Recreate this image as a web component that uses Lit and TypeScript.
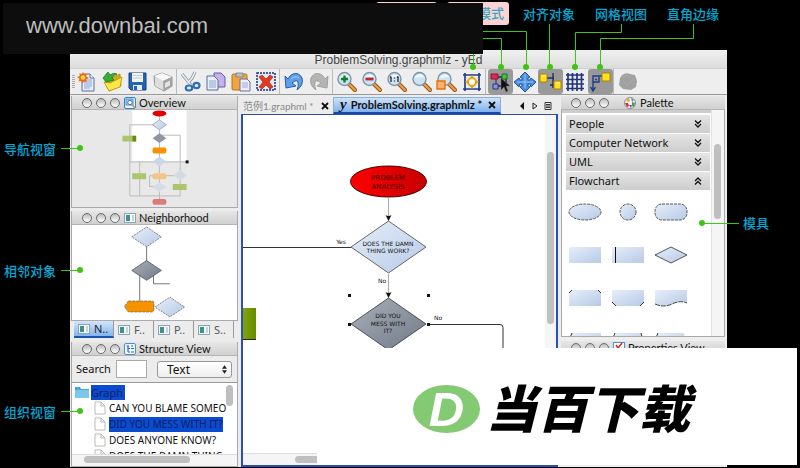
import { LitElement, html, svg, css } from "lit";
import { customElement, property } from "lit/decorators.js";

const page = svg`<path d="M6 4h8l4 4v13H6z" fill="#e9effc" stroke="#5b6c9e"/><path d="M14 4v4h4" fill="#fff" stroke="#5b6c9e"/><path d="M8 10h8M8 12h8M8 14h8M8 16h8M8 18h6" stroke="#8da3d6"/>`;

const lens = (inner: unknown) => svg`
  <path d="M14 14l6 6" stroke="#8c4d17" stroke-width="4" stroke-linecap="round"/>
  <path d="M14 14l6 6" stroke="#f49a3f" stroke-width="2.4" stroke-linecap="round"/>
  <circle cx="9.5" cy="9" r="6.5" fill="#cfe4f3" stroke="#7b95ab" stroke-width="1.4"/>
  <path d="M5 8a5 5 0 0 1 9-1q-4 0-9 1" fill="#f4fbff"/>${inner}`;

const icons: Record<string, unknown> = {
  new: svg`${page}<path d="M7 2l1.3 2.4L11 3.8l-.7 2.6L13 8l-2.700 1.300.4 2.700-2.600-.6L6.500 13.500 5.300 11 2.600 11.400l.8-2.600L1 7l2.700-1.100-.3-2.600 2.500.8z" fill="#f26a17"/><circle cx="7" cy="7.500" r="2.300" fill="#ffd63d"/>`,
  open: svg`<path d="M5 9l4-3 3 1 7-3 1 12-12 5z" fill="#d7a90c" stroke="#a98207" stroke-width=".7"/><path d="M3 12l6 1 12-6-2 10-11 4z" fill="#ffe746" stroke="#b28e0b" stroke-width=".8"/><path d="M2 8l5-6 2 3q4-3 7-1-4 1-5 4l2 2-8 2z" fill="#35ac32" stroke="#1c7a21" stroke-width=".8"/>`,
  save: svg`<path d="M3 3h17v17H5l-2-2z" fill="#2563b3" stroke="#173f85"/><path d="M6 3h11v9H6z" fill="#f1f3f6"/><path d="M7 5.500h9M7 8h9" stroke="#c6ccd4"/><path d="M7 15h9v5H7z" fill="#e8edf3"/><path d="M8 16h3v4H8z" fill="#2563b3"/>`,
  print: svg`<path d="M3 6l8-3 10 4v9l-8 5-9-5z" fill="#c4c4c4" stroke="#8a8a8a" stroke-width=".9"/><path d="M3 6l8-3 10 4-9 4z" fill="#f8f8f8"/><path d="M12 11l9-4v9l-8 5z" fill="#a2a2a2"/><path d="M14 13l5-2.500v5L14 18z" fill="#e4e4e4"/><path d="M4 7l8 4v9l-8-4z" fill="#dedede"/>`,
  cut: svg`<path d="M3 4q4 5 9 11M16 2q-2 6-7 11" stroke="#8e98a5" stroke-width="3.200" fill="none"/><path d="M3 4q4 5 9 11M16 2q-2 6-7 11" stroke="#e8ecf0" stroke-width="1.600" fill="none"/><ellipse cx="10" cy="18" rx="3.200" ry="2.500" fill="none" stroke="#2f6db8" stroke-width="2.200"/><ellipse cx="17.500" cy="15.500" rx="3" ry="2.600" fill="none" stroke="#2f6db8" stroke-width="2.200"/>`,
  copy: svg`<path d="M10 3h7l4 4v10H10z" fill="#c3b3ea" stroke="#6c5ba0"/><path d="M3 6h7l4 4v10H3z" fill="#e9effc" stroke="#5b6c9e"/><path d="M5 11h7M5 13h7M5 15h7M5 17h7" stroke="#8da3d6"/>`,
  paste: svg`<rect x="3" y="4" width="15" height="16" rx="1.500" fill="#f1a53c" stroke="#b0701d"/><path d="M7 3h7v4H7z" fill="#b9bec5" stroke="#7a7f87" stroke-width=".8"/><path d="M11 9h7l3 3v9H11z" fill="#eceffb" stroke="#6f6aa5"/><path d="M13 13h6M13 15h6M13 17h6" stroke="#9fa8d6"/>`,
  remove: svg`<rect x="3" y="3" width="18" height="17" fill="#dfe8f6" stroke="#17307c" stroke-width="1.500" stroke-dasharray="2 1"/><path d="M5 7l3-2 4 4 4-4 3 2-4 5 4 5-3 2-4-4-4 4-3-2 4-5z" fill="#e5391b" stroke="#9e1e0c" stroke-width=".6"/>`,
  undo: svg`<path d="M3 6l1 12 10-2-4-3q5-4 6-1 1 4-1 8 7-5 5-12-3-6-9-4-3 1-5 5z" fill="#5f9fe8" stroke="#1e5cab"/><path d="M9 9q4-4 8-1" stroke="#a9cdf6" fill="none"/>`,
  redo: svg`<path d="M21 6l-1 12-10-2 4-3q-5-4-6-1-1 4 1 8-7-5-5-12 3-6 9-4 3 1 5 5z" fill="#b4b4b4" stroke="#a0a0a0"/>`,
  zoomIn: lens(svg`<path d="M9.500 5.500v7M6 9h7" stroke="#147c24" stroke-width="2.400"/>`),
  zoomOut: lens(svg`<path d="M5.500 9h8" stroke="#c22133" stroke-width="2.800"/>`),
  zoomReset: lens(svg`<path d="M6 6.500v5.500M5 7.500l1-1M13 6.500v5.500M12 7.500l1-1M9.500 7.500v1M9.500 10.500v1" stroke="#222" stroke-width="1.300"/>`),
  zoom: lens(svg``),
  zoomArea: lens(svg`<path d="M2 11h8v8H2z" fill="#f9b26b" stroke="#e4730d" stroke-width="1.400"/>`),
  fit: svg`<path d="M5 3v18M19 3v18M3 5h18M3 19h18" stroke="#233f8e" stroke-width="1.700"/><circle cx="12" cy="12" r="4" fill="#fff" stroke="#e6a80f" stroke-width="2"/><path d="M12 5l2 3h-4zM12 19l2-3h-4zM5 12l3-2v4zM19 12l-3-2v4z" fill="#e6a80f"/>`,
  edit: svg`<path d="M8 7h10v9H9" fill="none" stroke="#1d2c68" stroke-width="1.500"/><path d="M8 8v8" stroke="#1d2c68"/><path d="M3 4h7v5H3z" fill="#df2858" stroke="#8e1237"/><path d="M14 4h5v5h-5z" fill="#3fc63c" stroke="#1b761c"/><path d="M5 14h5v5H5z" fill="#8797df" stroke="#25377f"/><path d="M13 8v12l3-3 2 5 2-1-2-5h4z" fill="#111" stroke="#777" stroke-width=".5"/>`,
  move: svg`<path d="M12 2l5 5-2 1v2h2l1-2 5 4-5 5-1-3h-2v2l2 1-5 5-5-5 2-1v-2H7l-1 3-5-5 5-4 1 2h2V8L7 7z" fill="#4b8ee0" stroke="#1c55a5"/><path d="M12 4v14M4 12h16" stroke="#9ac5f5"/>`,
  snap: svg`<path d="M9 8h7M15 3v15M15 15h-3" stroke="#1d2c68" stroke-width="1.400"/><path d="M2 4h7v8H2zM16 11h7v8h-7z" fill="#ffe01f" stroke="#a98500"/><path d="M4 6h4M18 13h4" stroke="#fff6a2"/>`,
  grid: svg`<path d="M5 3v18M9.500 3v18M14 3v18M18.500 3v18M3 5h18M3 9.500h18M3 14h18M3 18.500h18" stroke="#22357d" stroke-width="1.700"/>`,
  ortho: svg`<path d="M15 6H5v14M2.500 17L5 21l2.500-4M5 12h6V7" fill="none" stroke="#1d3a86" stroke-width="1.400"/><circle cx="8" cy="9.500" r="1" fill="#1d3a86"/><path d="M14 3h8v8h-8z" fill="#ffe01f" stroke="#a98500"/>`,
  cube: svg`<path d="M6 5q4-3 8-1l5 1 2 6-1 6-5 3-8-1-4-4 1-7z" fill="#a1a1a1"/><path d="M7 7l4-2 3 3M12 14l7-5M8 12l4 4" stroke="#adadad" fill="none"/>`,
};

const groups: [string, string][][] = [
  [["new", "New"], ["open", "Open"], ["save", "Save"], ["print", "Print"]],
  [["cut", "Cut"], ["copy", "Copy"], ["paste", "Paste"], ["remove", "Delete"]],
  [["undo", "Undo"], ["redo", "Redo"]],
  [["zoomIn", "Zoom in"], ["zoomOut", "Zoom out"], ["zoomReset", "Zoom 1:1"], ["zoom", "Zoom"], ["zoomArea", "Zoom to area"], ["fit", "Fit content"]],
  [["edit", "Edit mode"], ["move", "Navigation mode"], ["snap", "Snap"], ["grid", "Grid"], ["ortho", "Orthogonal edges"]],
  [["cube", "3D"]],
];
const pressed = new Set(["edit", "snap", "ortho"]);

const panelIcons: Record<string, unknown> = {
  overview: svg`<rect x=".5" y=".5" width="11" height="11" rx="1.500" fill="#eaf5ff" stroke="#2789d8"/><rect x="2" y="2" width="7" height="6" fill="#a8cdf0" stroke="#5c8cc0"/><circle cx="6" cy="5.500" r="2.200" fill="#fff" stroke="#3c77b5"/><path d="M8 7.500l2.500 3" stroke="#e8862c" stroke-width="1.500"/>`,
  list: svg`<rect x=".5" y="1.500" width="11" height="9" fill="#f6fbff" stroke="#8ca3b5"/><path d="M2 3h4v6H2z" fill="#3d9188"/><path d="M8 4h2M8 6h2M8 8h2" stroke="#9aa"/>`,
  tree: svg`<rect x=".5" y=".5" width="11" height="11" rx="1.500" fill="#eef6ff" stroke="#4b8fd6"/><path d="M2.500 3H5M4 3v6M4 5.500h2M4 9h2M7 3h2M7 5.500h3M7 9h3" stroke="#3569b8" stroke-width="1.200" fill="none"/>`,
  palette: svg`<circle cx="6" cy="6" r="5.500" fill="#f4f4f4" stroke="#8b8b8b"/><path d="M2 3l3-2 1 3-2 1z" fill="#f0a020"/><path d="M7 1l3 2-2 2z" fill="#3a8fe0"/><path d="M1 6h3l1 3-2 1z" fill="#d52f2f"/><path d="M8 5l3 1-1 4-2-1z" fill="#3aa83a"/><path d="M5 8h3l-1 3z" fill="#8040b0"/>`,
  check: svg`<rect x=".5" y=".5" width="11" height="11" fill="#fff" stroke="#4b8fd6"/><path d="M3 3l2 3 4-5M3 8l2 3 4-5" stroke="#d22" stroke-width="1.500" fill="none"/>`,
};

@customElement("panel-header")
export class PanelHeader extends LitElement {
  @property() label = "";
  @property() icon = "";
  static styles = css`
    :host { display: flex; align-items: center; height: 14px; padding-left: 10px; background: linear-gradient(#e6e6e6, #d0d0d0); border-bottom: 1px solid #b4b4b4; font: 11px/14px "Lato", sans-serif; color: #111; }
    button { flex: none; width: 10px; height: 10px; padding: 0; margin-right: 4px; border: 1px solid #6a6a6a; border-radius: 5px; background: linear-gradient(#bbb, #fff); }
    svg { flex: none; width: 12px; height: 12px; margin-right: 3px; }
    :host([spaced]) svg { margin: 0 4px 0 11px; }
    h2 { margin: 0; font: inherit; white-space: nowrap; }
  `;
  render() {
    return html`<button aria-label="Close"></button><button aria-label="Float"></button><button aria-label="Dock"></button>
      <svg viewBox="0 0 12 12" aria-hidden="true">${panelIcons[this.icon]}</svg><h2>${this.label}</h2>`;
  }
}

const diamond = (cx: number, cy: number, w: number, h: number) => `M${cx} ${cy - h}L${cx + w} ${cy}L${cx} ${cy + h}L${cx - w} ${cy}Z`;

const gradients = svg`<defs>
  <linearGradient id="pale" x1="0" y1="0" x2="1" y2="1"><stop offset="0" stop-color="#e6effa"/><stop offset="1" stop-color="#b7c9e6"/></linearGradient>
  <linearGradient id="slate" x1="0" y1="0" x2="1" y2="1"><stop offset="0" stop-color="#a8afb9"/><stop offset="1" stop-color="#717a88"/></linearGradient>
  <linearGradient id="red"><stop offset="0" stop-color="#ff0000"/><stop offset="1" stop-color="#c80000"/></linearGradient>
  <linearGradient id="green"><stop offset="0" stop-color="#7fa408"/><stop offset="1" stop-color="#668c00"/></linearGradient>
</defs>`;

const sections = [["People", false], ["Computer Network", false], ["UML", false], ["Flowchart", true]] as const;

const shapes = [
  svg`<ellipse cx="17" cy="9" rx="16" ry="8" class="dash"/>`,
  svg`<circle cx="17" cy="9" r="8" class="dash"/>`,
  svg`<rect x="1" y="1" width="32" height="16" rx="7" class="dash"/>`,
  svg`<path d="M1 1h32v16H1z"/>`,
  svg`<path d="M1 1h32v16H1z"/><path d="M4.500 1v16" stroke="#111"/>`,
  svg`<path d="M17 1l16 8-16 8L1 9z" stroke="#555"/>`,
  svg`<path d="M4 1h26l3 3v13H1V4z"/><path d="M1 4l3-3M30 1l3 3" stroke="#333"/>`,
  svg`<path d="M1 1h32v12l-4 4H5l-4-4z"/><path d="M1 13l4 4M33 13l-4 4" stroke="#333"/>`,
  svg`<path d="M1 1h32v13q-8-3-15 1T1 15z"/><path d="M1 15q9 4 17 0t15-1" fill="none" stroke="#444" stroke-dasharray="5 1"/>`,
  svg`<path d="M4 1h29v16H1z"/><path d="M4 1L1 8" stroke="#333"/>`,
  svg`<path d="M4 1h26l3 16H1z"/><path d="M4 1L1 8M30 1l2 7" stroke="#333"/>`,
  svg`<path d="M4 1h26l3 16H1z"/><path d="M4 1L1 8" stroke="#333"/>`,
];

@customElement("app-root")
export class AppRoot extends LitElement {
  static styles = css`
    :host { display: flex; flex-direction: column; position: relative; box-sizing: border-box; min-height: 100vh; padding: 50px 73px 1px 70px; overflow: hidden; background: #000; color: #111; font: 11px/14px "Noto Sans", "Noto Sans CJK SC", sans-serif; }
    * { box-sizing: border-box; }
    button, input, select { font: inherit; color: inherit; }
    button { padding: 0; border: 0; background: none; }
    .window { flex: 1; display: flex; flex-direction: column; background: #ececec; }
    .title { margin: 0; height: 19px; padding-top: 1px; font: 12px/18px "Liberation Sans", sans-serif; color: #444; text-align: center; background: linear-gradient(#f0f0f0, #dcdcdc); border-bottom: 1px solid #d0d0d0; }
    .toolbar { display: flex; height: 26px; border-bottom: 1px solid #999; background: #eee; }
    .grip { width: 3px; margin: 6px 1px 6px 2px; background: repeating-linear-gradient(#aaa 0 1px, #eee 1px 2px); }
    .group { display: flex; }
    .group + .group { border-left: 1px solid #bbb; padding-left: 2px; }
    .tool { width: 25px; height: 25px; }
    .tool svg { display: block; width: 24px; height: 24px; }
    .tool[aria-pressed="true"] { background: #999; border-radius: 3px; }
    .work { flex: 1; display: grid; grid-template-columns: 170px 1fr 167px; min-height: 0; }
    .col { display: flex; flex-direction: column; min-width: 0; padding: 1px 2px 0 1px; }
    .panel { border: 0 solid #aaa; border-width: 0 1px 1px; margin-bottom: 3px; }
    .panel svg.view { display: block; width: 100%; height: 97px; }
    .thumb { background: #e8e8e8; }
    .panel svg.near { height: 95px; background: #fff; }
    .panel.flat { margin-bottom: 0; }
    .tabs { display: flex; height: 17px; margin: 0 0 4px 3px; }
    .tabs button { display: flex; align-items: center; width: 40px; padding-left: 4px; gap: 4px; color: #555; border-right: 1px solid #999; }
    .tabs svg { width: 12px; height: 12px; }
    .tabs .on { background: linear-gradient(#d4e6fa, #83b4ec); border-bottom: 2px solid #1c52b3; color: #222; }
    .panel.structure { flex: 1; display: flex; flex-direction: column; margin: 0; }
    .search { display: flex; align-items: center; height: 26px; padding: 0 5px 0 4px; }
    .search label { width: 40px; }
    .search input { width: 31px; height: 18px; margin: 0 10px 0 0; border: 1px solid #aaa; background: #fff; }
    .pick { position: relative; flex: 1; }
    .pick select { appearance: none; display: block; width: 100%; height: 17px; padding: 0 9px; font-size: 12px; line-height: 15px; border: 1px solid #999; border-radius: 3px; background: linear-gradient(#fff, #eee); }
    .pick svg { position: absolute; right: 5px; top: 4px; width: 5px; height: 9px; pointer-events: none; }
    .treebox { position: relative; flex: 1; background: #fff; border-top: 1px solid #999; overflow: hidden; }
    .tree { height: 72px; margin: 0; padding: 1px 13px 0 3px; list-style: none; overflow: hidden; font: 10px/15px "Noto Sans", sans-serif; white-space: nowrap; }
    .tree li { display: flex; align-items: center; height: 16px; padding-left: 18px; }
    .tree li.root { padding-left: 0; }
    .tree span { height: 15px; }
    .tree .sel { background: #0a4bd0; color: #0c1f63; }
    .tree .root span { font-size: 11px; padding-right: 2px; }
    .tree svg { flex: none; width: 14px; height: 14px; margin-right: 2px; }
    .bar { position: absolute; border-radius: 4px; background: #bfbfbf; }
    .tree-v { right: 4px; top: 2px; width: 7px; height: 21px; }
    .track { position: absolute; background: #f5f5f5; }
    .tree-ht { left: 0; right: 0; bottom: 0; height: 12px; border-top: 1px solid #ddd; }
    .tree-h { left: 12px; bottom: 3px; width: 106px; height: 7px; }
    .center { display: flex; flex-direction: column; min-width: 0; padding: 2px 2px 0 1px; }
    .docs { display: flex; align-items: center; height: 17px; white-space: nowrap; }
    .doc { display: flex; flex: none; align-items: center; height: 17px; font: 10px/14px "Lato", "Noto Sans CJK SC", sans-serif; color: #888; }
    .doc.first { width: 92px; padding-left: 2px; }
    .doc.on { width: 168px; padding-left: 6px; gap: 4px; border: 1px solid #8ab0dd; border-bottom: 2px solid #1546a8; background: linear-gradient(#cfe2f8, #7fb2ee); color: #111; font: 700 11px/14px "Lato", sans-serif; }
    .doc .x { flex: none; margin: 0 4px 0 auto; width: 8px; height: 8px; }
    .doc .x svg { display: block; width: 8px; height: 8px; }
    .doc .y { font: italic 700 15px/14px "Liberation Serif", serif; padding-bottom: 2px; }
    .nav { display: flex; gap: 5px; margin-left: auto; padding-right: 6px; }
    .nav svg { width: 8px; height: 8px; display: block; }
    .canvas { position: relative; flex: 1; border: 2px solid #2c50ad; border-top-width: 1px; background: #fff; overflow: hidden; }
    .canvas svg { display: block; width: 303px; height: 337px; }
    .canvas text { font: 6px "DejaVu Sans", sans-serif; text-anchor: middle; fill: #111; }
    .canvas text.start { font-size: 7px; fill: #400; }
    .canvas-vt { right: 0; top: 0; bottom: 0; width: 11px; }
    .canvas-v { right: 2px; top: 37px; width: 7px; height: 172px; }
    .canvas-ht { left: 0; right: 0; bottom: 0; height: 12px; border-top: 1px solid #ddd; }
    .canvas-h { left: 52px; bottom: 2px; width: 120px; height: 7px; }
    .right { padding: 1px 2px 2px 1px; background: #eee; }
    .palette { position: relative; height: 227px; padding: 5px 14px 0 4px; background: linear-gradient(#ccc 0 3px, #fff 3px); border: 1px solid #aaa; border-top: 0; margin-bottom: 4px; overflow: hidden; }
    .section { display: flex; align-items: center; justify-content: space-between; width: 100%; height: 18px; margin-bottom: 1px; padding: 0 8px 0 3px; font: 11px/18px "Noto Sans", sans-serif; background: linear-gradient(#e4e4e4, #cdcdcd); }
    .section svg { width: 8px; height: 8px; fill: none; stroke: #111; }
    .shapes { display: grid; grid-template-columns: repeat(3, 34px); gap: 25px 9px; padding: 12px 2px 0; }
    .shapes svg { width: 34px; height: 18px; fill: url(#pale); }
    .shapes .dash { stroke: #555; stroke-dasharray: 3 1; }
    .palette-t { right: 0; top: 0; bottom: 0; width: 13px; border-left: 1px solid #e2e2e2; }
    .palette-v { right: 3px; top: 34px; width: 7px; height: 75px; }
    .defs { position: absolute; width: 0; height: 0; }
    .lines { position: absolute; left: 0; top: 0; width: 730px; height: 468px; pointer-events: none; fill: none; stroke: #3fc414; }
    .lines circle { fill: #3fc414; stroke: none; }
    .note { position: absolute; font: 500 13px/16px "Noto Sans CJK SC", sans-serif; color: #00a9d6; white-space: nowrap; }
    .n1 { left: 4px; top: 141px; } .n2 { left: 4px; top: 263px; } .n3 { left: 4px; top: 404px; }
    .n4 { left: 523px; top: 6px; } .n5 { left: 595px; top: 6px; } .n6 { left: 667px; top: 6px; }
    .n7 { right: 4px; top: 215px; display: flex; align-items: center; width: 97px; }
    .n7 i { width: 6px; height: 6px; border-radius: 3px; background: #3fc414; }
    .n7 b { width: 34px; height: 1px; margin-right: 4px; background: #3fc414; }
    .mode { left: 447px; top: 2px; width: 62px; height: 23px; padding: 3px 5px 0 0; text-align: right; border-radius: 3px; background: #fcd3d5; color: #3ba8bf; }
    .chip { position: absolute; left: 376px; top: 2px; width: 61px; height: 22px; border-radius: 3px; background: #fcd3d5; }
    .site { position: absolute; left: 3px; top: 3px; width: 480px; height: 51px; padding: 11px 23px; background: #0d0d0d; color: #bdbdbd; font: 22px/24px "Liberation Sans", sans-serif; }
    .brand { position: absolute; right: 3px; bottom: 3px; width: 480px; height: 117px; display: flex; align-items: center; padding: 4px 0 0 96px; gap: 6px; background: #fff; color: #000; font: italic 900 51px/60px "Noto Sans CJK SC", sans-serif; white-space: nowrap; }
    .brand .name { padding-bottom: 6px; }
    .badge { display: flex; align-items: center; justify-content: center; width: 67px; height: 48px; border-radius: 50%; background: #84ca73; color: #fff; font: italic 700 49px/48px "Liberation Sans", sans-serif; }
  `;

  private cross() {
    return html`<button class="x" aria-label="Close tab"><svg viewBox="0 0 8 8"><path d="M1 1l6 6M7 1L1 7" stroke="#111" stroke-width="1.800"/></svg></button>`;
  }

  private overview() {
    return svg`<path d="M61 0h55v52H61z" fill="#fff"/>
      <g fill="none" stroke="#bbb"><path d="M88.500 5v90M88 15H58.500v72H109.500V25.500H88M58 52.500h58M68.500 52v35M88 66.500h22M88 66.500H78.500v11H88"/></g>
      <ellipse cx="88.500" cy="3.500" rx="7" ry="3" fill="#e30000"/>
      <path d=${diamond(88.5, 15, 7, 5)} fill="url(#pale)" stroke="#aab"/><path d=${diamond(88.5, 28.5, 7, 5)} fill="#8e96a2"/>
      <rect x="81.500" y="38" width="14" height="6" rx="2" fill="#f69200"/><path d=${diamond(88.5, 52, 7, 5)} fill="#cad7e5"/>
      <path d="M51 26h10v6H51zM61 64H75v6H61zM102 75h14v6h-14z" fill="#acc46b"/><path d="M61 26h4v6h-4z" fill="#688e09"/>
      <rect x="81.500" y="64" width="14" height="6" rx="2" fill="#f4c587"/><path d=${diamond(109.5, 66, 7, 5)} fill="#d5dbe4"/>
      <path d=${diamond(88.5, 78, 7, 5)} fill="#d5dde8"/><rect x="81.500" y="90" width="14" height="6" rx="2" fill="#db7c7c"/>
      <path d="M115 51h3v3h-3z" fill="#111"/>`;
  }

  private neighborhood() {
    return svg`<g fill="none" stroke="#777"><path d="M75.500 15v32M68.500 50v28M82.500 50v9.500H99"/></g>
      <path d=${diamond(75.5, 12, 15, 10)} fill="url(#pale)" stroke="#556" stroke-width=".7" stroke-dasharray="2 1"/>
      <path d=${diamond(75.5, 46, 15, 10)} fill="url(#slate)" stroke="#445" stroke-width=".7"/>
      <path d="M57 77h24q2 0 2 3v5q0 3-2 3H57l-4-5.500z" fill="#f69200" stroke="#665" stroke-width=".7" stroke-dasharray="3 1"/>
      <path d=${diamond(99, 83, 15, 10)} fill="url(#pale)" stroke="#556" stroke-width=".7" stroke-dasharray="2 1"/>`;
  }

  private flow() {
    const arrow = "l-3-6q3 2 6 0z";
    return svg`<g fill="none" stroke="#333"><path d="M0 132.500h108" /><path d="M145.500 83v20M145.500 159v20" stroke="#aaa"/><path d="M185 209.500h72q3 0 3 3V240"/></g>
      <path d="M0 193h13v31H0z" fill="url(#green)"/><path d="M0 224.500h13" stroke="#222"/>
      <ellipse cx="145.500" cy="66.500" rx="38" ry="15.500" fill="url(#red)" stroke="#400"/>
      <path d=${diamond(145.5, 132, 37.5, 26)} fill="url(#pale)" stroke="#444" stroke-width=".8"/>
      <path d=${diamond(145.5, 209, 37.5, 26)} fill="url(#slate)" stroke="#333" stroke-width=".8"/>
      <path d="M145.500 106${arrow}M145.500 183${arrow}M105 179h3v3h-3zM184 179h3v3h-3zM105 208h3v3h-3zM184 208h3v3h-3z" fill="#111"/>
      <text class="start" x="145" y="65">PROBLEM</text><text class="start" x="145" y="74">ANALYSIS</text>
      <text x="145" y="131">DOES THE DAMN</text><text x="145" y="138">THING WORK?</text>
      <text x="145" y="203">DID YOU</text><text x="145" y="211">MESS WITH</text><text x="145" y="218">IT?</text>
      <text x="98" y="129">Yes</text><text x="139" y="168">No</text><text x="195" y="205">No</text>`;
  }

  render() {
    const file = html`<svg viewBox="0 0 14 14" aria-hidden="true"><path d="M2 1h6l4 4v8H2z" fill="#fff" stroke="#bbb"/><path d="M8 1v4h4" fill="none" stroke="#bbb"/></svg>`;
    return html`
      <svg class="defs" aria-hidden="true">${gradients}</svg>
      <main class="window">
        <h1 class="title">ProblemSolving.graphmlz - yEd</h1>
        <div class="toolbar" role="toolbar"><span class="grip"></span>
          ${groups.map((g) => html`<div class="group">${g.map(([id, label]) => html`<button class="tool" aria-label=${label} aria-pressed=${pressed.has(id)}><svg viewBox="0 0 24 24" fill="none">${icons[id]}</svg></button>`)}</div>`)}
        </div>
        <div class="work">
          <div class="col">
            <section class="panel"><panel-header label="Overview" icon="overview"></panel-header>
              <svg class="view thumb" viewBox="0 0 167 97" preserveAspectRatio="xMinYMin">${this.overview()}</svg></section>
            <section class="panel flat"><panel-header label="Neighborhood" icon="list"></panel-header>
              <svg class="view near" viewBox="0 0 167 95" preserveAspectRatio="xMinYMin">${this.neighborhood()}</svg></section>
            <div class="tabs">${["N..", "F..", "P..", "S.."].map((t, i) => html`<button class=${i ? "" : "on"}><svg viewBox="0 0 12 12">${panelIcons.list}</svg>${t}</button>`)}</div>
            <section class="panel structure"><panel-header label="Structure View" icon="tree"></panel-header>
              <div class="search"><label for="q">Search</label><input id="q" type="text">
                <div class="pick"><select aria-label="Search in"><option>Text</option></select><svg viewBox="0 0 6 10"><path d="M3 0l3 4H0zM3 10l3-4H0z" fill="#222"/></svg></div></div>
              <div class="treebox">
                <ul class="tree">
                  <li class="root"><svg viewBox="0 0 14 14"><path d="M0 2h5l1 2h8v9H0z" fill="#4ba6d6"/><path d="M0 5h14v8H0z" fill="#7bc8ec"/></svg><span class="sel">Graph</span></li>
                  <li>${file}<span>CAN YOU BLAME SOMEO</span></li>
                  <li>${file}<span class="sel">DID YOU MESS WITH IT?</span></li>
                  <li>${file}<span>DOES ANYONE KNOW?</span></li>
                  <li>${file}<span>DOES THE DAMN THING</span></li>
                </ul>
                <div class="bar tree-v"></div><div class="track tree-ht"></div><div class="bar tree-h"></div>
              </div></section>
          </div>
          <div class="center">
            <div class="docs">
              <div class="doc first">范例1.graphml * ${this.cross()}</div>
              <div class="doc on"><span class="y">y</span>ProblemSolving.graphmlz * ${this.cross()}</div>
              <div class="nav">
                <button aria-label="Previous"><svg viewBox="0 0 8 8"><path d="M6 0v8L2 4z" fill="#111"/></svg></button>
                <button aria-label="Next"><svg viewBox="0 0 8 8"><path d="M2 1v6l4-3z" fill="none" stroke="#222"/></svg></button>
                <button aria-label="List"><svg viewBox="0 0 8 8"><path d="M1 .5h6v7H1zM2 2.500h4M2 4h4M2 5.500h4" fill="none" stroke="#222" stroke-width=".9"/></svg></button>
              </div>
            </div>
            <div class="canvas"><svg viewBox="0 0 303 337">${this.flow()}</svg>
              <div class="track canvas-vt"></div><div class="track canvas-ht"></div><div class="bar canvas-v"></div><div class="bar canvas-h"></div></div>
          </div>
          <div class="right">
            <panel-header spaced label="Palette" icon="palette"></panel-header>
            <div class="palette">
              ${sections.map(([name, open]) => html`<button class="section" aria-expanded=${open}>${name}<svg viewBox="0 0 8 8"><path d=${open ? "M1 4l3-3 3 3M1 7.500l3-3 3 3" : "M1 .5l3 3 3-3M1 4l3 3 3-3"} stroke-width="1.300"/></svg></button>`)}
              <div class="shapes">${shapes.map((s) => html`<svg viewBox="0 0 34 18">${s}</svg>`)}</div>
              <div class="track palette-t"></div><div class="bar palette-v"></div>
            </div>
            <panel-header label="Properties View" icon="check"></panel-header>
          </div>
        </div>
      </main>
      <svg class="lines" viewBox="0 0 730 468" aria-hidden="true">
        <path d="M61 148.500h19M61 270.500h19M61 411.500h19M473.500 54v13M483 38.500h18.500V67M483 31.500h43.500V67M549.500 24v43M621.500 24v8.500h-46V67M693.500 24v14.500h-93V67"/>
        ${[[80, 148], [80, 270], [80, 411], [473, 67], [501, 67], [526, 67], [550, 67], [575, 67], [600, 67]].map(([x, y]) => svg`<circle cx=${x} cy=${y} r="3"/>`)}
      </svg>
      <span class="note n1">导航视窗</span><span class="note n2">相邻对象</span><span class="note n3">组织视窗</span>
      <span class="note n4">对齐对象</span><span class="note n5">网格视图</span><span class="note n6">直角边缘</span>
      <span class="note n7"><i></i><b></b>模具</span>
      <span class="chip"></span><span class="note mode">模式</span>
      <div class="site">www.downbai.com</div>
      <div class="brand"><span class="badge">D</span><span class="name">当百下载</span></div>
    `;
  }
}
